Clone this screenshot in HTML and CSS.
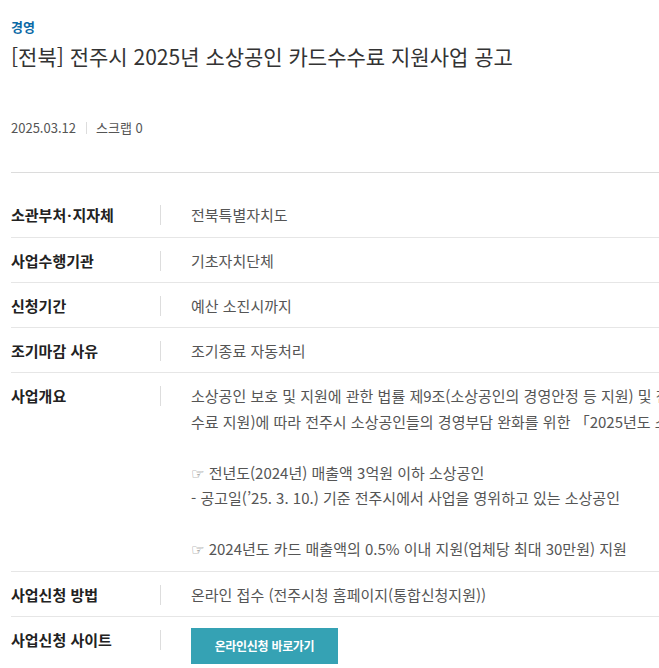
FILE: index.html
```html
<!DOCTYPE html>
<html lang="ko">
<head>
<meta charset="utf-8">
<link rel="stylesheet" href="styles.css">
</head>
<body>
<div class="page">
  <div class="head">
    <p class="cate">경영</p>
    <h1 class="title">[전북] 전주시 2025년 소상공인 카드수수료 지원사업 공고</h1>
    <div class="meta">
      <span class="date">2025.03.12</span>
      <span class="scrap">스크랩 0</span>
    </div>
  </div>
  <dl class="info">
    <div class="row">
      <dt class="label">소관부처<span class="dot">·</span>지자체</dt>
      <dd class="value">전북특별자치도</dd>
    </div>
    <div class="row">
      <dt class="label">사업수행기관</dt>
      <dd class="value">기초자치단체</dd>
    </div>
    <div class="row">
      <dt class="label">신청기간</dt>
      <dd class="value">예산 소진시까지</dd>
    </div>
    <div class="row">
      <dt class="label">조기마감 사유</dt>
      <dd class="value">조기종료 자동처리</dd>
    </div>
    <div class="row">
      <dt class="label">사업개요</dt>
      <dd class="value">
        <p class="line">소상공인 보호 및 지원에 관한 법률 제9조(소상공인의 경영안정 등 지원) 및 전주시 소상공인 지원 조례 제8조(카드수</p>
        <p class="line">수료 지원)에 따라 전주시 소상공인들의 경영부담 완화를 위한 「2025년도 소상공인 카드수수료 지원사업」을 공고합니다.</p>
        <p class="line">&nbsp;</p>
        <p class="line"><span class="hand">☞</span> 전년도(2024년) 매출액 3억원 이하 소상공인</p>
        <p class="line">- 공고일(’25. 3. 10.) 기준 전주시에서 사업을 영위하고 있는 소상공인</p>
        <p class="line">&nbsp;</p>
        <p class="line"><span class="hand">☞</span> 2024년도 카드 매출액의 0.5% 이내 지원(업체당 최대 30만원) 지원</p>
      </dd>
    </div>
    <div class="row">
      <dt class="label">사업신청 방법</dt>
      <dd class="value">온라인 접수 (전주시청 홈페이지(통합신청지원))</dd>
    </div>
    <div class="row last">
      <dt class="label">사업신청 사이트</dt>
      <dd class="value"><a class="btn">온라인신청 바로가기</a></dd>
    </div>
  </dl>
</div>
</body>
</html>
```

FILE: styles.css
```css
html, body {
  margin: 0;
  padding: 0;
  background: #fff;
  overflow: hidden;
}
body {
  font-family: "Noto Sans CJK KR", "Noto Sans", sans-serif;
  color: #333;
}
.page {
  width: 1000px;
  padding: 0 0 0 11px;
}
.head {
  padding-top: 17px;
  padding-bottom: 35px;
  border-bottom: 1px solid #dcdcdc;
}
.cate {
  margin: 0;
  font-size: 13px;
  line-height: 20px;
  font-weight: 700;
  color: #0b6aa6;
}
.title {
  margin: 5px 0 0;
  font-size: 21px;
  line-height: 28px;
  font-weight: 400;
  color: #333;
}
.meta {
  margin-top: 49px;
  display: flex;
  align-items: center;
  font-size: 13px;
  line-height: 18px;
  color: #555;
}
.date {
  padding-right: 10px;
}
.scrap {
  padding-left: 9px;
  border-left: 1px solid #ddd;
  line-height: 12px;
}
.info {
  margin: 19px 0 0;
}
.row {
  display: flex;
  border-bottom: 1px solid #e6e6e6;
  padding: 10px 0 9px;
}
.row.last {
  border-bottom: none;
  padding-bottom: 5px;
}
.label {
  width: 150px;
  flex: none;
  font-size: 15px;
  line-height: 25px;
  font-weight: 700;
  color: #222;
  position: relative;
}
.dot {
  font-family: "Noto Sans", sans-serif;
  margin: 0 1px;
}
.label::after {
  content: "";
  position: absolute;
  right: 0;
  top: 3px;
  width: 1px;
  height: 20px;
  background: #ddd;
}
.value {
  margin: 0 0 0 30px;
  font-size: 15px;
  line-height: 25px;
  color: #555;
  white-space: nowrap;
}
.line {
  margin: 0;
  height: 25.5px;
  line-height: 25.5px;
}
.hand {
  font-family: "DejaVu Sans", sans-serif;
  font-size: 15px;
  line-height: 1;
  color: #777;
}
.btn {
  display: inline-flex;
  align-items: center;
  justify-content: center;
  width: 147px;
  height: 36px;
  margin-top: 1px;
  background: #35a2b4;
  color: #fff;
  font-size: 12px;
  font-weight: 700;
  letter-spacing: -0.3px;
}
```
